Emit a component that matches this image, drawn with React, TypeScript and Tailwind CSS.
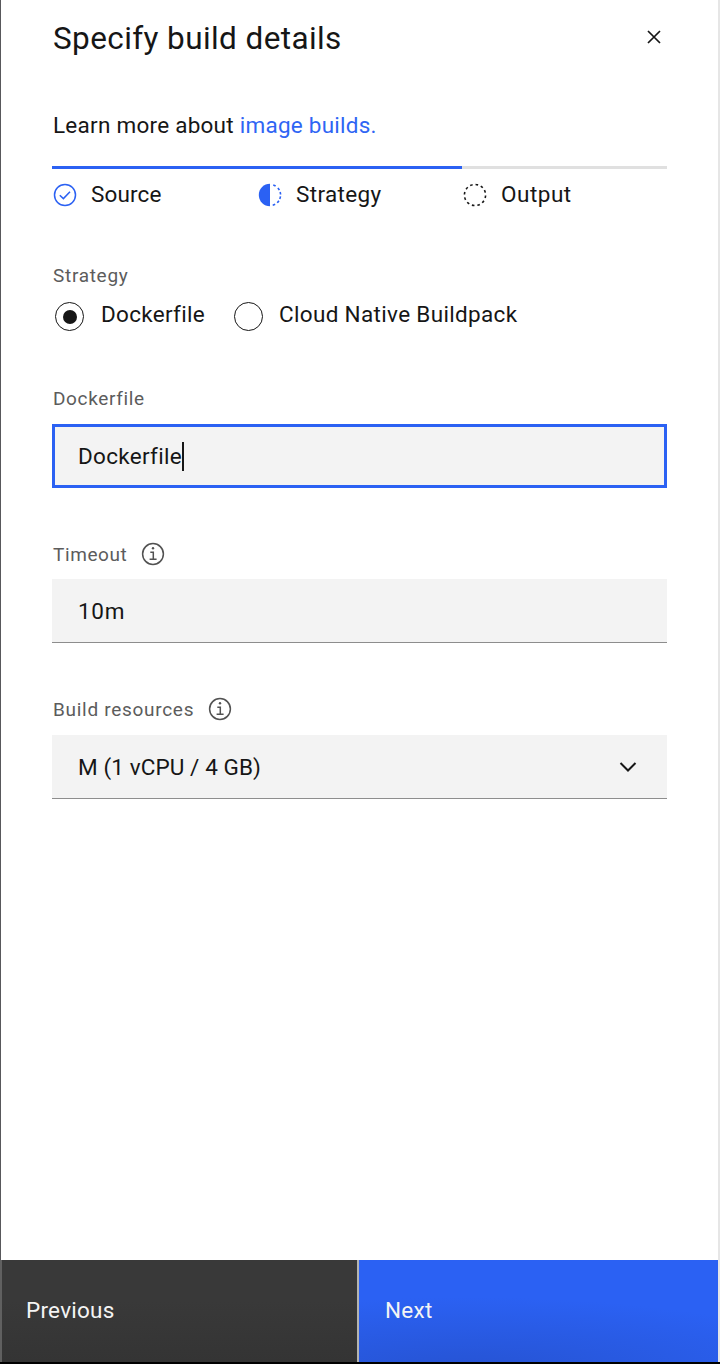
import React from "react";

const ticks = (from: number, to: number, step: number) => {
  const out: number[] = [];
  for (let a = from; a <= to; a += step) out.push(a);
  return out;
};

function Dashes({ angles, color }: { angles: number[]; color: string }) {
  return (
    <g fill="none" stroke={color} strokeWidth="1.6">
      {angles.map((a) => (
        <path key={a} d="M10.5 -1.3A10.5 10.5 0 0 1 10.5 1.3" transform={`translate(12 12) rotate(${a})`} />
      ))}
    </g>
  );
}

function CompleteIcon() {
  return (
    <svg className="size-6 shrink-0" viewBox="0 0 24 24" fill="none" stroke="#2b61f3" strokeWidth="1.5">
      <circle cx="12" cy="12" r="10.5" />
      <path d="M6.8 12.2L10.4 15.6L17 8.8" />
    </svg>
  );
}

function CurrentIcon() {
  return (
    <svg className="size-6 shrink-0" viewBox="0 0 24 24">
      <path d="M12 .8A11.2 11.2 0 0 0 12 23.2Z" fill="#2b61f3" />
      <Dashes angles={[-65, -35, -10, 15, 40, 68]} color="#2b61f3" />
    </svg>
  );
}

function IncompleteIcon() {
  return (
    <svg className="size-6 shrink-0" viewBox="0 0 24 24">
      <Dashes angles={ticks(10, 350, 30)} color="#161616" />
    </svg>
  );
}

function InfoIcon() {
  return (
    <svg className="size-6 shrink-0" viewBox="0 0 24 24" fill="none" stroke="#525252" strokeWidth="1.5">
      <circle cx="12" cy="12" r="10.4" />
      <path d="M9.3 10.2H12.3V17.3M8.6 17.3H15.6" />
      <circle cx="12" cy="6.3" r="1.2" fill="#525252" stroke="none" />
    </svg>
  );
}

function Step({ icon, label, bar, spacing }: { icon: React.ReactNode; label: string; bar: string; spacing: string }) {
  return (
    <li className={`flex h-[46px] w-[205px] border-t-3 pt-[11px] ${bar}`}>
      <span className="pt-[3px] pl-[1px]">{icon}</span>
      <span className={`ml-[14px] text-[22.5px] leading-7 ${spacing}`}>{label}</span>
    </li>
  );
}

export default function App() {
  return (
    <div className="flex h-[1364px] w-[720px] flex-col border-b-2 border-black bg-white font-['Roboto',sans-serif] text-[#161616]">
      <div className="flex h-[1260px] flex-col border-r-2 border-l border-r-[#e6e6e6] border-l-[#58585b] pr-[51px] pl-[51px]">
        <header className="flex h-[76px] items-start justify-between">
          <h1 className="pt-[19px] pl-[1px] text-[31.5px] leading-10 tracking-[0.4px]">Specify build details</h1>
          <button aria-label="Close" className="mt-[30px] mr-[6px]">
            <svg className="size-[14px]" viewBox="0 0 14 14" fill="none" stroke="#161616" strokeWidth="1.7">
              <path d="M1 1L13 13M13 1L1 13" />
            </svg>
          </button>
        </header>
        <p className="mt-[35px] h-[55px] pl-[1px] text-[22.5px] leading-7 tracking-[0.25px]">
          <span>Learn more about </span>
          <a className="text-[#2f65f4]">image builds.</a>
        </p>
        <ol className="flex">
          <Step icon={<CompleteIcon />} label="Source" bar="border-[#2b61f3]" spacing="tracking-[0.15px]" />
          <Step icon={<CurrentIcon />} label="Strategy" bar="border-[#2b61f3]" spacing="tracking-[0.35px]" />
          <Step icon={<IncompleteIcon />} label="Output" bar="border-[#e0e0e0]" spacing="tracking-[0.5px]" />
        </ol>
        <fieldset className="mt-[52px] h-[79px]">
          <legend className="pl-[1px] text-[19px] leading-6 tracking-[0.7px] text-[#5c5c5c]">Strategy</legend>
          <div className="mt-[13px] flex pl-[3px]">
            <span className="mt-px flex size-[29px] items-center justify-center rounded-full border-[1.5px] border-[#161616]">
              <span className="size-[14px] rounded-full bg-[#161616]" />
            </span>
            <span className="-mt-[1px] ml-[16px] w-[134px] pl-px text-[22.5px] leading-7 tracking-[0.3px]">Dockerfile</span>
            <span className="mt-px size-[29px] rounded-full border border-[#161616]" />
            <span className="-mt-[1px] ml-[16px] text-[22.5px] leading-7 tracking-[0.33px]">Cloud Native Buildpack</span>
          </div>
        </fieldset>
        <div className="mt-[43px]">
          <label className="block h-[38px] pt-px pl-[1px] text-[19px] leading-6 tracking-[0.65px] text-[#5c5c5c]">Dockerfile</label>
          <div className="flex h-16 items-center border-3 border-[#2b61f3] bg-[#f3f3f3] pl-[23px]">
            <span className="text-[22.5px] leading-7 tracking-[0.3px]">Dockerfile</span>
            <span className="h-[29px] w-[2px] bg-[#161616]" />
          </div>
        </div>
        <div className="mt-[54px]">
          <div className="flex h-[37px]">
            <label className="w-[89px] pt-px pl-[1px] text-[19px] leading-6 tracking-[0.6px] text-[#5c5c5c]">Timeout</label>
            <InfoIcon />
          </div>
          <div className="flex h-16 items-center border-b border-[#8d8d8d] bg-[#f3f3f3] pl-[26px]">
            <span className="text-[22.5px] leading-7 tracking-[0.7px]">10m</span>
          </div>
        </div>
        <div className="mt-[54px]">
          <div className="flex h-[38px]">
            <label className="w-[156px] pt-px pl-[1px] text-[19px] leading-6 tracking-[0.71px] text-[#5c5c5c]">Build resources</label>
            <InfoIcon />
          </div>
          <div className="flex h-16 items-center justify-between border-b border-[#8d8d8d] bg-[#f3f3f3] pr-[30px] pl-[26px]">
            <span className="text-[22.5px] leading-7 tracking-[0.1px]">M (1 vCPU / 4 GB)</span>
            <svg className="h-[10px] w-[18px]" viewBox="0 0 18 10" fill="none" stroke="#161616" strokeWidth="2">
              <path d="M1.5 1L9 8.5L16.5 1" />
            </svg>
          </div>
        </div>
      </div>
      <footer className="flex h-[102px] border-r-2 border-l-2 border-r-[#e6e6e6] border-l-[#606060] text-[22.5px] leading-7 text-[#f4f4f4]">
        <button className="flex w-[357px] items-center border-r-2 border-[#b4b4b0] bg-linear-to-b from-[#393939] from-40% to-[#343434] pb-[2px] pl-[24px] text-left">
          <span className="tracking-[0.25px]">Previous</span>
        </button>
        <button className="flex grow items-center bg-[radial-gradient(ellipse_380px_75px_at_30%_110%,#2653d2,#2b61f3)] pb-[2px] pl-[26px] text-left">
          <span className="tracking-[0.3px]">Next</span>
        </button>
      </footer>
    </div>
  );
}
